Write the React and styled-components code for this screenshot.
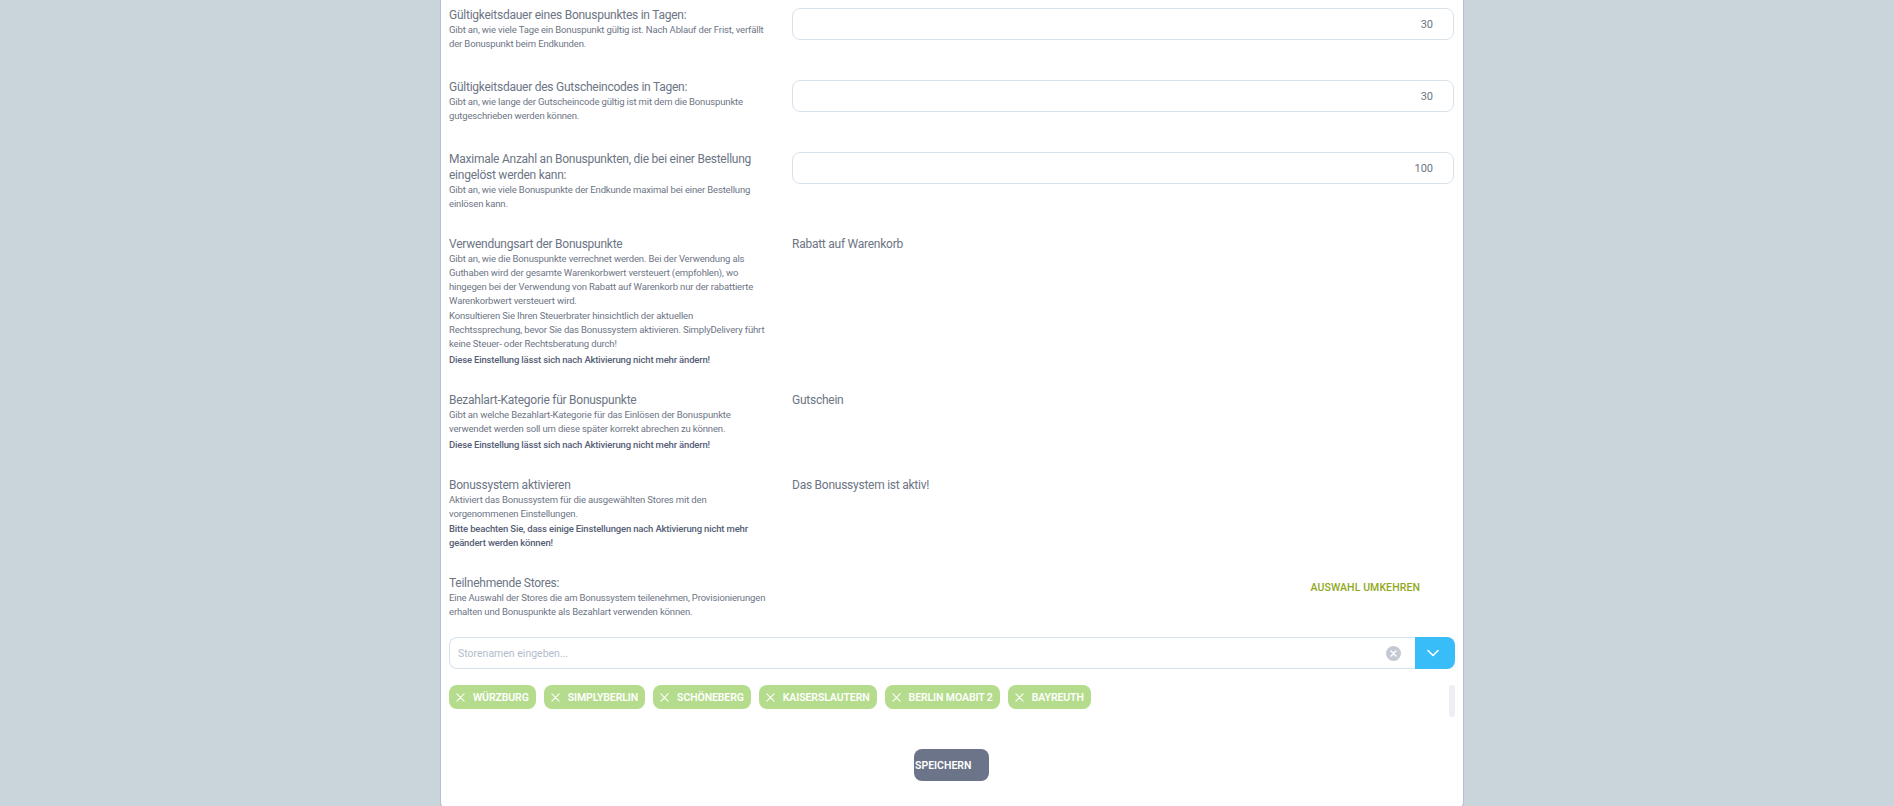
import React from 'react';
import styled, { createGlobalStyle } from 'styled-components';

const GlobalStyle = createGlobalStyle`
  html, body {
    margin: 0;
    height: 100%;
    overflow: hidden;
    background: #c9d4db;
  }
  * {
    box-sizing: border-box;
  }
`;

const FONT = `'Roboto', 'Noto Sans', sans-serif`;

const Page = styled.div`
  height: 806px;
  overflow: hidden;
  padding-left: 440px;
  font-family: ${FONT};
  color: #6d7585;
`;

const Card = styled.main`
  width: 1024px;
  height: 810px;
  padding: 7px 9px 0 8px;
  background: #fff;
  border: 1px solid #b4c0d2;
  border-top: 0;
  border-radius: 0 0 8px 8px;
`;

const Row = styled.section`
  display: grid;
  grid-template-columns: 322px 662px;
  column-gap: 21px;
  min-height: ${props => props.minHeight || 0}px;
  margin-bottom: ${props => (props.tight ? 18 : 25)}px;
`;

const Title = styled.h3`
  margin: 0;
  font-size: 12px;
  line-height: 16px;
  font-weight: 400;
  letter-spacing: -0.25px;
  color: #6d7585;
`;

const Desc = styled.p`
  margin: 0 0 ${props => props.gap || 0}px;
  font-size: 9.5px;
  line-height: 14px;
  letter-spacing: -0.15px;
  color: #6d7585;
`;

const Strong = styled(Desc)`
  font-weight: 500;
  letter-spacing: -0.17px;
  color: #566076;
`;

const NumberInput = styled.input`
  display: block;
  width: 100%;
  height: 32px;
  margin-top: 1px;
  padding: 0 20px 0 16px;
  border: 1px solid #d7e1ea;
  border-radius: 8px;
  outline: none;
  background: #fff;
  font-family: ${FONT};
  font-size: 11px;
  text-align: right;
  color: #6d7585;
`;

const Value = styled.div`
  font-size: 12px;
  line-height: 16px;
  letter-spacing: -0.25px;
  color: #6d7585;
`;

const InvertCell = styled.div`
  display: flex;
  justify-content: flex-end;
  padding-top: 5px;
  padding-right: 34px;
`;

const InvertLink = styled.a`
  font-size: 10.5px;
  line-height: 16px;
  font-weight: 500;
  letter-spacing: 0.1px;
  color: #8fa81e;
  cursor: pointer;
`;

const SelectBox = styled.div`
  display: flex;
  width: 1006px;
  height: 32px;
`;

const SelectField = styled.div`
  flex: 1;
  display: flex;
  align-items: center;
  padding: 0 14px 0 8px;
  border: 1px solid #d7e1ea;
  border-right: 0;
  border-radius: 8px 0 0 8px;
`;

const SelectInput = styled.input`
  flex: 1;
  border: 0;
  outline: none;
  padding: 0;
  font-family: ${FONT};
  font-size: 10.5px;
  color: #6d7585;

  &::placeholder {
    color: #b3bccb;
    opacity: 1;
  }
`;

const ClearIcon = styled.svg`
  width: 15px;
  height: 15px;
  display: block;
`;

const SelectToggle = styled.button`
  width: 40px;
  display: flex;
  align-items: center;
  justify-content: center;
  padding: 0 4px 0 0;
  border: 0;
  border-radius: 0 8px 8px 0;
  background: #38bdf8;
`;

const ChipArea = styled.div`
  position: relative;
  display: flex;
  gap: 8px;
  width: 1006px;
  height: 32px;
  margin-top: 16px;
`;

const Chip = styled.span`
  display: flex;
  align-items: center;
  height: 24px;
  padding: 0 7px 0 7px;
  border-radius: 8px;
  background: #b4dc8c;
  font-size: 10.5px;
  font-weight: 600;
  letter-spacing: -0.1px;
  color: #fff;
  white-space: nowrap;
`;

const ChipIcon = styled.svg`
  width: 9px;
  height: 9px;
  margin-right: 8px;
  flex: none;
`;

const ScrollThumb = styled.div`
  position: absolute;
  top: 0;
  right: 0;
  width: 6px;
  height: 32px;
  border-radius: 3px;
  background: #eeeff4;
`;

const Actions = styled.div`
  display: flex;
  width: 1005px;
  justify-content: center;
  margin-top: 32px;
`;

const SaveButton = styled.button`
  width: 75px;
  height: 32px;
  padding: 0 0 0 1px;
  border: 0;
  border-radius: 8px;
  background: #6b7488;
  font-family: ${FONT};
  font-size: 10.5px;
  font-weight: 600;
  text-align: left;
  color: #fff;
`;

const STORES = ['Würzburg', 'SimplyBerlin', 'Schöneberg', 'Kaiserslautern', 'Berlin Moabit 2', 'Bayreuth'];

const App = () => (
  <Page>
    <GlobalStyle />
    <Card>
      <Row minHeight={47}>
        <div>
          <Title>Gültigkeitsdauer eines Bonuspunktes in Tagen:</Title>
          <Desc>Gibt an, wie viele Tage ein Bonuspunkt gültig ist. Nach Ablauf der Frist, verfällt der Bonuspunkt beim Endkunden.</Desc>
        </div>
        <NumberInput readOnly value="30" />
      </Row>
      <Row minHeight={47}>
        <div>
          <Title>Gültigkeitsdauer des Gutscheincodes in Tagen:</Title>
          <Desc>Gibt an, wie lange der Gutscheincode gültig ist mit dem die Bonuspunkte gutgeschrieben werden können.</Desc>
        </div>
        <NumberInput readOnly value="30" />
      </Row>
      <Row>
        <div>
          <Title>Maximale Anzahl an Bonuspunkten, die bei einer Bestellung eingelöst werden kann:</Title>
          <Desc>Gibt an, wie viele Bonuspunkte der Endkunde maximal bei einer Bestellung einlösen kann.</Desc>
        </div>
        <NumberInput readOnly value="100" />
      </Row>
      <Row>
        <div>
          <Title>Verwendungsart der Bonuspunkte</Title>
          <Desc gap={1}>Gibt an, wie die Bonuspunkte verrechnet werden. Bei der Verwendung als Guthaben wird der gesamte Warenkorbwert versteuert (empfohlen), wo hingegen bei der Verwendung von Rabatt auf Warenkorb nur der rabattierte Warenkorbwert versteuert wird.</Desc>
          <Desc gap={2}>Konsultieren Sie Ihren Steuerbrater hinsichtlich der aktuellen<br />Rechtssprechung, bevor Sie das Bonussystem aktivieren. SimplyDelivery führt<br />keine Steuer- oder Rechtsberatung durch!</Desc>
          <Strong>Diese Einstellung lässt sich nach Aktivierung nicht mehr ändern!</Strong>
        </div>
        <Value>Rabatt auf Warenkorb</Value>
      </Row>
      <Row>
        <div>
          <Title>Bezahlart-Kategorie für Bonuspunkte</Title>
          <Desc gap={2}>Gibt an welche Bezahlart-Kategorie für das Einlösen der Bonuspunkte verwendet werden soll um diese später korrekt abrechen zu können.</Desc>
          <Strong>Diese Einstellung lässt sich nach Aktivierung nicht mehr ändern!</Strong>
        </div>
        <Value>Gutschein</Value>
      </Row>
      <Row>
        <div>
          <Title>Bonussystem aktivieren</Title>
          <Desc gap={1}>Aktiviert das Bonussystem für die ausgewählten Stores mit den vorgenommenen Einstellungen.</Desc>
          <Strong>Bitte beachten Sie, dass einige Einstellungen nach Aktivierung nicht mehr geändert werden können!</Strong>
        </div>
        <Value>Das Bonussystem ist aktiv!</Value>
      </Row>
      <Row tight>
        <div>
          <Title>Teilnehmende Stores:</Title>
          <Desc>Eine Auswahl der Stores die am Bonussystem teilenehmen, Provisionierungen erhalten und Bonuspunkte als Bezahlart verwenden können.</Desc>
        </div>
        <InvertCell>
          <InvertLink>AUSWAHL UMKEHREN</InvertLink>
        </InvertCell>
      </Row>
      <SelectBox>
        <SelectField>
          <SelectInput placeholder="Storenamen eingeben..." />
          <ClearIcon viewBox="0 0 15 15">
            <circle cx="7.5" cy="7.5" r="7.5" fill="#c5c9d3" />
            <path d="M5 5l5 5M10 5l-5 5" stroke="#fff" strokeWidth="1.4" strokeLinecap="round" />
          </ClearIcon>
        </SelectField>
        <SelectToggle aria-label="Stores anzeigen">
          <svg width="12" height="8" viewBox="0 0 12 8">
            <path d="M1 1.5l5 5 5-5" fill="none" stroke="#fff" strokeWidth="1.6" strokeLinecap="round" strokeLinejoin="round" />
          </svg>
        </SelectToggle>
      </SelectBox>
      <ChipArea>
        {STORES.map(store => (
          <Chip key={store}>
            <ChipIcon viewBox="0 0 10 10">
              <path d="M1 1l8 8M9 1l-8 8" stroke="#fff" strokeWidth="1.2" strokeLinecap="round" />
            </ChipIcon>
            {store.toUpperCase()}
          </Chip>
        ))}
        <ScrollThumb />
      </ChipArea>
      <Actions>
        <SaveButton>SPEICHERN</SaveButton>
      </Actions>
    </Card>
  </Page>
);

export default App;
